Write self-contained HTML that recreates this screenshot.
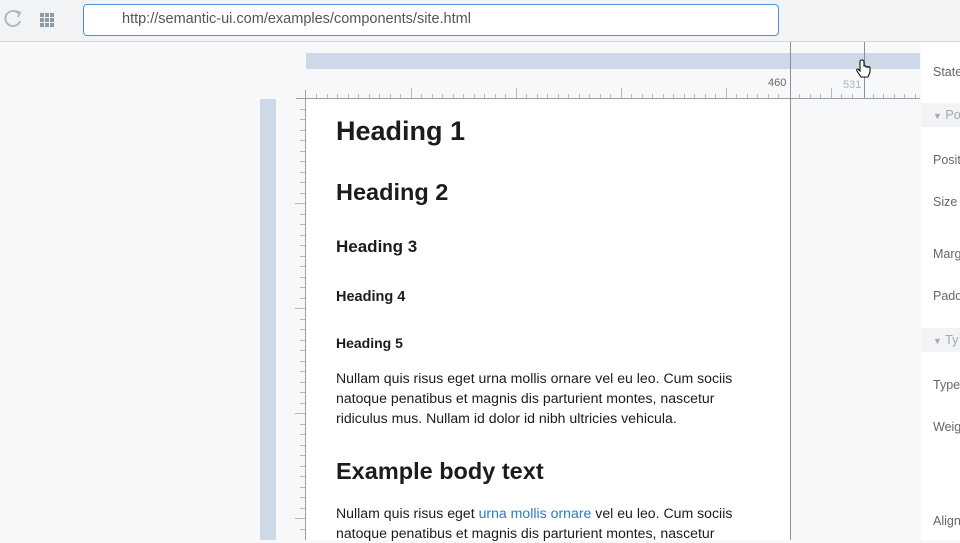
<!DOCTYPE html>
<html><head><meta charset="utf-8"><style>
*{margin:0;padding:0;box-sizing:border-box}
body{width:960px;height:540px;overflow:hidden;background:#f7f8fa;font-family:"Liberation Sans",sans-serif;position:relative;color:#1b1c1d}
.a{position:absolute;white-space:nowrap}
#top{left:0;top:0;width:960px;height:42px;background:#f2f3f5;border-bottom:1px solid #d4d6d9}
#url{left:83px;top:4px;width:696px;height:32px;background:#fff;border:1.5px solid #4a90e2;border-radius:4px;font-size:14.5px;color:#555;padding:6px 0 0 38px}
.h{font-weight:bold;color:#1b1c1d}
.p{font-size:14.1px;line-height:20px}
.lab{font-size:12.5px;color:#666;left:933px}
</style></head><body>
<div class="a" id="top"></div>
<svg class="a" style="left:0;top:0" width="80" height="42">
<path d="M18.5 13.5 A7.5 7.5 0 1 0 20 21" fill="none" stroke="#a9b4c0" stroke-width="1.8"/>
<path d="M15 11 L20 12.5 L18 17" fill="none" stroke="#a9b4c0" stroke-width="1.8"/>
<g fill="#8c99a8"><rect x="40" y="13" width="4" height="4"/><rect x="45" y="13" width="4" height="4"/><rect x="50" y="13" width="4" height="4"/><rect x="40" y="18" width="4" height="4"/><rect x="45" y="18" width="4" height="4"/><rect x="50" y="18" width="4" height="4"/><rect x="40" y="23" width="4" height="4"/><rect x="45" y="23" width="4" height="4"/><rect x="50" y="23" width="4" height="4"/></g>
</svg>
<div class="a" id="url">http://semantic-ui.com/examples/components/site.html</div>
<div class="a" style="left:306px;top:53px;width:614px;height:16px;background:#cdd9e8"></div>
<div class="a" style="left:260px;top:99px;width:16px;height:441px;background:#cdd9e8"></div>
<div class="a" style="left:306px;top:99px;width:484px;height:441px;background:#fff"></div>
<svg class="a" style="left:0;top:0" width="960" height="540">
<line x1="296" y1="98.5" x2="920" y2="98.5" stroke="#9aa0a6"/>
<line x1="305.5" y1="90" x2="305.5" y2="540" stroke="#9aa0a6"/>
<g stroke="#b4bac1" stroke-width="1">
<path d="M316.5 94v4M327.5 94v4M337.5 94v4M348.5 94v4M358.5 94v4M369.5 94v4M379.5 94v4M390.5 94v4M400.5 94v4M411.5 88v10M421.5 94v4M432.5 94v4M442.5 94v4M453.5 94v4M463.5 94v4M474.5 94v4M484.5 94v4M495.5 94v4M505.5 94v4M516.5 88v10M526.5 94v4M537.5 94v4M547.5 94v4M558.5 94v4M568.5 94v4M579.5 94v4M589.5 94v4M600.5 94v4M610.5 94v4M621.5 88v10M631.5 94v4M642.5 94v4M652.5 94v4M663.5 94v4M673.5 94v4M684.5 94v4M694.5 94v4M705.5 94v4M715.5 94v4M726.5 88v10M736.5 94v4M747.5 94v4M757.5 94v4M768.5 94v4M778.5 94v4M799.5 94v4M810.5 94v4M820.5 94v4M831.5 88v10M841.5 94v4M852.5 94v4M873.5 94v4M883.5 94v4M894.5 94v4M904.5 94v4M915.5 94v4"/>
<path d="M300 109.5h5M300 119.5h5M300 130.5h5M300 140.5h5M300 151.5h5M300 161.5h5M300 172.5h5M300 182.5h5M300 193.5h5M295 203.5h10M300 214.5h5M300 224.5h5M300 235.5h5M300 245.5h5M300 256.5h5M300 266.5h5M300 277.5h5M300 287.5h5M300 298.5h5M295 308.5h10M300 319.5h5M300 329.5h5M300 340.5h5M300 350.5h5M300 361.5h5M300 371.5h5M300 382.5h5M300 392.5h5M300 403.5h5M295 413.5h10M300 424.5h5M300 434.5h5M300 445.5h5M300 455.5h5M300 466.5h5M300 476.5h5M300 487.5h5M300 497.5h5M300 508.5h5M295 518.5h10M300 529.5h5"/>
</g>
<line x1="790.5" y1="42" x2="790.5" y2="540" stroke="#8a9098"/>
<line x1="864.5" y1="42" x2="864.5" y2="98" stroke="#8a9098"/>
<text x="768" y="86" font-size="11" fill="#666" font-family="Liberation Sans">460</text>
<text x="843" y="88" font-size="11" fill="#a8b6c6" font-family="Liberation Sans">531</text>
<path d="M860 63 v8 l-2 -2 q-2 0 -1 2 l4 6 h7 l2 -5 v-4 q0 -2 -2 -1 v1 q0-2 -2-1 q0-2 -2-1 v-4 q0-2 -2 -2 q-2 0 -2 2z" fill="#fff" stroke="#111" stroke-width="1.1"/>
</svg>
<div class="a" style="left:921px;top:42px;width:39px;height:498px;background:#fff"></div>
<div class="a" style="left:921px;top:103px;width:39px;height:24px;background:#f2f3f5"></div>
<div class="a" style="left:921px;top:328px;width:39px;height:24px;background:#f2f3f5"></div>
<div class="a lab" style="top:65px">State</div>
<div class="a lab" style="top:108px;color:#a0a8b2"><span style="font-size:9px">▼</span> Po</div>
<div class="a lab" style="top:153px">Posit</div>
<div class="a lab" style="top:195px">Size</div>
<div class="a lab" style="top:247px">Marg</div>
<div class="a lab" style="top:289px">Padd</div>
<div class="a lab" style="top:333px;color:#a0a8b2"><span style="font-size:9px">▼</span> Ty</div>
<div class="a lab" style="top:378px">Type</div>
<div class="a lab" style="top:420px">Weig</div>
<div class="a lab" style="top:514px">Align</div>
<div class="a h" style="left:336px;top:116px;font-size:27px">Heading 1</div>
<div class="a h" style="left:336px;top:179px;font-size:23.5px">Heading 2</div>
<div class="a h" style="left:336px;top:237px;font-size:17px">Heading 3</div>
<div class="a h" style="left:336px;top:289px;font-size:14.5px">Heading 4</div>
<div class="a h" style="left:336px;top:335px;font-size:14px">Heading 5</div>
<div class="a p" style="left:336px;top:368px">Nullam quis risus eget urna mollis ornare vel eu leo. Cum sociis<br>natoque penatibus et magnis dis parturient montes, nascetur<br>ridiculus mus. Nullam id dolor id nibh ultricies vehicula.</div>
<div class="a h" style="left:336px;top:458px;font-size:23.5px">Example body text</div>
<div class="a p" style="left:336px;top:503px">Nullam quis risus eget <span style="color:#2f7bc4">urna mollis ornare</span> vel eu leo. Cum sociis<br>natoque penatibus et magnis dis parturient montes, nascetur</div>
</body></html>
